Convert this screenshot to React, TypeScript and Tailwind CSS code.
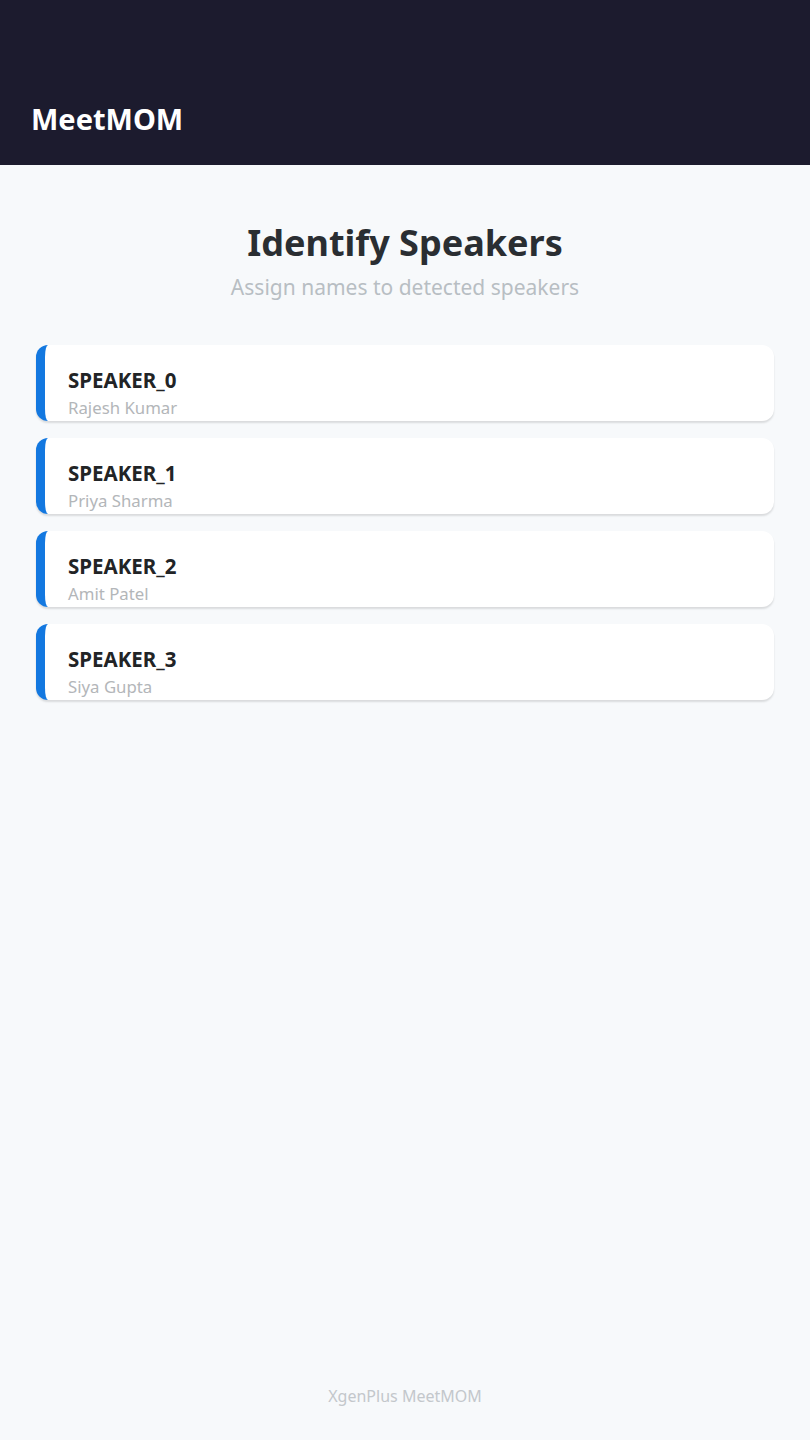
import React from "react";

const speakers = [
  { id: "SPEAKER_0", name: "Rajesh Kumar" },
  { id: "SPEAKER_1", name: "Priya Sharma" },
  { id: "SPEAKER_2", name: "Amit Patel" },
  { id: "SPEAKER_3", name: "Siya Gupta" },
];

export default function App() {
  return (
    <div
      className="flex min-h-[1440px] flex-col bg-[#f7f9fb]"
      style={{ fontFamily: '"Noto Sans", "Open Sans", sans-serif' }}
    >
      <header className="flex h-[165px] items-end bg-[#1c1b2e] px-[31px] pb-[28px]">
        <h1 className="text-[29px] font-bold leading-[36px] text-white">MeetMOM</h1>
      </header>
      <main className="flex flex-1 flex-col px-[36px] pt-[54px]">
        <div className="flex flex-col items-center">
          <h2 className="text-[36px] font-bold leading-[48px] text-[#2a2e32]">Identify Speakers</h2>
          <p className="mt-[6px] text-[21px] leading-[28px] text-[#b8bec3]">Assign names to detected speakers</p>
        </div>
        <div className="mt-[44px] flex flex-col gap-[17px]">
          {speakers.map((s) => (
            <div
              key={s.id}
              className="flex h-[76px] flex-col rounded-xl border-l-[9px] border-[#1378e0] bg-white pl-[23px] pt-[21px] shadow-[0_2px_2px_rgba(0,0,0,0.12)]"
            >
              <div className="text-[20.5px] font-bold leading-[28px] text-[#222426]">{s.id}</div>
              <div className="text-[16.8px] leading-[27px] text-[#b3b6b9]">{s.name}</div>
            </div>
          ))}
        </div>
        <div className="flex-1" />
        <footer className="pb-[33px] text-center text-[16px] leading-[22px] text-[#c3c7cb]">XgenPlus MeetMOM</footer>
      </main>
    </div>
  );
}
